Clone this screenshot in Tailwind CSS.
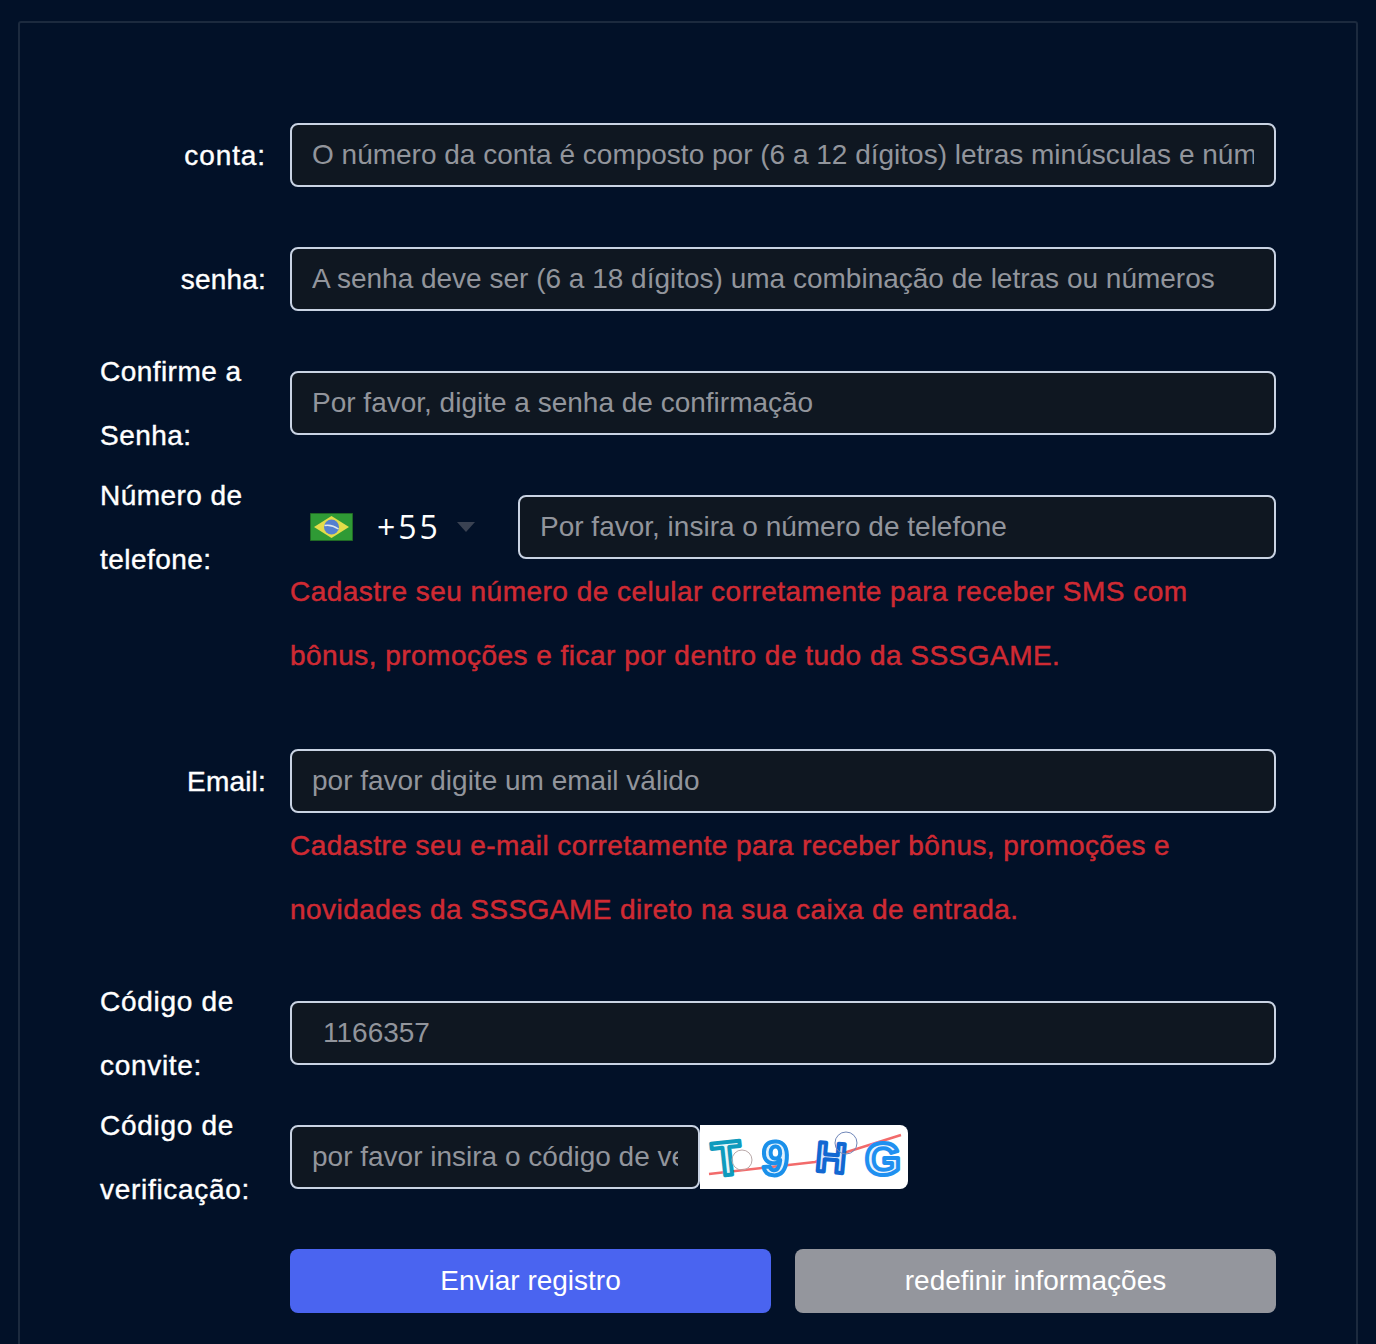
<!DOCTYPE html>
<html lang="pt">
    <head>
        <meta charset="UTF-8" />
        <meta name="viewport" content="width=device-width, initial-scale=1.0" />
        <title>Registro</title>
        <script src="https://cdn.jsdelivr.net/npm/@tailwindcss/browser@4"></script>
    </head>

    <body class="bg-[#021128] h-[1344px] overflow-hidden pt-[21px] px-[18px] font-['Liberation_Sans',Arial,sans-serif] text-[28px] leading-[64px] text-white">
        <main class="h-[1400px] border-2 border-[#1c2a3e] rounded-[3px] pt-[100px] pl-[80px] bg-[#021128]">
            <form class="flex flex-col gap-[60px] w-[1176px]">
                <!-- conta -->
                <div class="flex">
                    <label class="w-[166px] mr-6 pt-px h-16 text-right tracking-[0.9px] [-webkit-text-stroke:0.4px_white]">conta:</label>
                    <input type="text" placeholder="O número da conta é composto por (6 a 12 dígitos) letras minúsculas e números" class="w-[986px] h-16 pl-5 pr-5 bg-[#0f1721] border-2 border-[#c9d3e3] rounded-lg placeholder:text-[#92959c] outline-none" />
                </div>
                <!-- senha -->
                <div class="flex">
                    <label class="w-[166px] mr-6 pt-px h-16 text-right tracking-[0.2px] [-webkit-text-stroke:0.4px_white]">senha:</label>
                    <input type="text" placeholder="A senha deve ser (6 a 18 dígitos) uma combinação de letras ou números" class="w-[986px] h-16 pl-5 pr-5 bg-[#0f1721] border-2 border-[#c9d3e3] rounded-lg placeholder:text-[#92959c] outline-none" />
                </div>
                <!-- confirmar -->
                <div class="flex">
                    <label class="w-[166px] mr-6 -mt-[31px] -mb-[33px] tracking-[0.45px] [-webkit-text-stroke:0.4px_white]">Confirme a Senha:</label>
                    <input type="text" placeholder="Por favor, digite a senha de confirmação" class="w-[986px] h-16 pl-5 pr-5 bg-[#0f1721] border-2 border-[#c9d3e3] rounded-lg placeholder:text-[#92959c] outline-none" />
                </div>
                <!-- telefone -->
                <div class="flex">
                    <label class="w-[166px] mr-6 -mt-[31px] -mb-[33px] tracking-[0.45px] [-webkit-text-stroke:0.4px_white]">Número de telefone:</label>
                    <div class="w-[986px]">
                        <div class="flex items-center">
                            <div class="w-[228px] h-16 flex items-center pl-5">
                                <svg class="w-[43px] h-[28px]" viewBox="0 0 43 28">
                                    <rect width="43" height="28" fill="#2f9a35" stroke="#1d5a20" stroke-width="1.5" />
                                    <path d="M21.5 3 39 14 21.5 25 4 14Z" fill="#e3dc4a" />
                                    <circle cx="21.5" cy="14" r="7.5" fill="#5580d0" />
                                    <path d="M14.5 12.5q7-1.5 14 3.5" stroke="#dfe8ee" stroke-width="1.5" fill="none" />
                                </svg>
                                <span class="ml-6 text-[32px] tracking-[3px] font-['Open_Sans',sans-serif]">+55</span>
                                <span class="ml-4 w-0 h-0 border-x-[9px] border-x-transparent border-t-[10px] border-t-[#3a4252]"></span>
                            </div>
                            <input type="text" placeholder="Por favor, insira o número de telefone" class="w-[758px] h-16 pl-5 pr-5 bg-[#0f1721] border-2 border-[#c9d3e3] rounded-lg placeholder:text-[#92959c] outline-none" />
                        </div>
                        <p class="pt-px pb-px pr-10 tracking-[0.48px] text-[#cf2a33] [-webkit-text-stroke:0.5px_#cf2a33]">Cadastre seu número de celular corretamente para receber SMS com bônus, promoções e ficar por dentro de tudo da SSSGAME.</p>
                    </div>
                </div>
                <!-- email -->
                <div class="flex">
                    <label class="w-[166px] mr-6 pt-px h-16 text-right tracking-[0.2px] [-webkit-text-stroke:0.4px_white]">Email:</label>
                    <div class="w-[986px]">
                        <input type="text" placeholder="por favor digite um email válido" class="w-full h-16 pl-5 pr-5 bg-[#0f1721] border-2 border-[#c9d3e3] rounded-lg placeholder:text-[#92959c] outline-none" />
                        <p class="pt-px -mb-px pr-10 tracking-[0.45px] text-[#cf2a33] [-webkit-text-stroke:0.5px_#cf2a33]">Cadastre seu e-mail corretamente para receber bônus, promoções e novidades da SSSGAME direto na sua caixa de entrada.</p>
                    </div>
                </div>
                <!-- convite -->
                <div class="flex">
                    <label class="w-[166px] mr-6 -mt-[31px] -mb-[33px] tracking-[0.7px] [-webkit-text-stroke:0.4px_white]">Código de convite:</label>
                    <input type="text" value="1166357" class="w-[986px] h-16 pl-[31px] pr-5 bg-[#0f1721] border-2 border-[#c9d3e3] rounded-lg text-[#92959c] outline-none" />
                </div>
                <!-- verificacao -->
                <div class="flex">
                    <label class="w-[166px] mr-6 -mt-[31px] -mb-[33px] tracking-[0.7px] [-webkit-text-stroke:0.4px_white]">Código de verificação:</label>
                    <input type="text" placeholder="por favor insira o código de verificação" class="w-[410px] h-16 pl-5 pr-5 bg-[#0f1721] border-2 border-[#c9d3e3] rounded-lg placeholder:text-[#92959c] outline-none" />
                    <svg class="w-[208px] h-16 bg-white rounded-r-lg" viewBox="0 0 208 64">
                        <path d="M9 49 115 37 201 10" stroke="#f26b6b" stroke-width="2.5" fill="none" />
                        <g font-family="'Liberation Sans',sans-serif" font-weight="700" stroke-width="4" stroke-linejoin="round">
                            <text x="12" y="50" font-size="48" fill="#e8f6f8" stroke="#0f9bbd" transform="rotate(-6 27 32)">T</text>
                            <text x="62" y="50" font-size="48" fill="#e0f0fc" stroke="#1a90ea" transform="rotate(4 75 32)">9</text>
                            <text x="116" y="47" font-size="42" fill="#dbe9fb" stroke="#1268d2" transform="rotate(5 131 32)">H</text>
                            <text x="165" y="50" font-size="46" fill="#eaf5fe" stroke="#1f90f0">G</text>
                        </g>
                        <circle cx="42" cy="35" r="10" fill="none" stroke="#b9a9a9" stroke-width="1" />
                        <circle cx="146" cy="18" r="11" fill="none" stroke="#6f86b8" stroke-width="1" />
                    </svg>
                </div>
                <!-- botoes -->
                <div class="flex gap-6 ml-[190px]">
                    <button type="button" class="w-[481px] h-16 bg-[#4a64f0] rounded-lg">Enviar registro</button>
                    <button type="button" class="w-[481px] h-16 bg-[#94969d] rounded-lg">redefinir informações</button>
                </div>
            </form>
        </main>
    </body>
</html>
